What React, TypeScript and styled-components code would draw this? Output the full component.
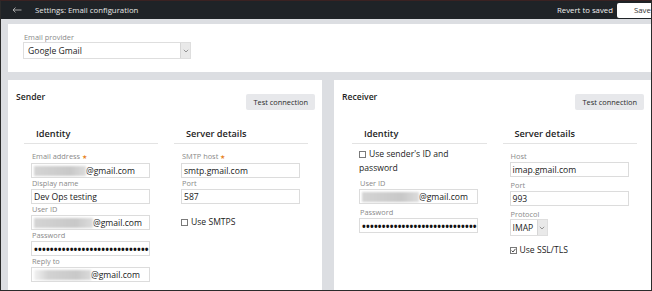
import React from 'react';
import styled, { createGlobalStyle } from 'styled-components';

const Global = createGlobalStyle`
  html, body { margin: 0; padding: 0; background: #fff; }
  body { font-family: "Open Sans", "Liberation Sans", sans-serif; }
  * { box-sizing: border-box; }
`;

const Frame = styled.div`
  width: 652px;
  height: 291px;
  border: 1px solid #2b2b2b;
  border-top-color: #3a2222;
  background: #dcdee2;
  overflow: hidden;
  display: flex;
  flex-direction: column;
`;

const Header = styled.header`
  height: 18px;
  flex: none;
  background: #1f2327;
  display: flex;
  align-items: center;
  color: #ececec;
`;

const BackButton = styled.span`
  display: flex;
  margin-left: 11px;
  width: 10px;
`;

const Title = styled.span`
  margin-left: 13px;
  font-size: 7.8px;
  line-height: 10px;
  color: #e6e6e6;
  flex: 1;
`;

const Revert = styled.span`
  font-size: 7.8px;
  color: #f0f0f0;
  margin-right: 4px;
`;

const SaveButton = styled.span`
  height: 15px;
  width: 34px;
  flex: none;
  background: #fff;
  color: #333;
  font-size: 7.8px;
  border-radius: 2px 0 0 2px;
  display: flex;
  align-items: center;
  padding-left: 17px;
  overflow: hidden;
  white-space: nowrap;
`;

const Body = styled.main`
  flex: 1;
  display: flex;
  flex-direction: column;
  padding: 5px 0 0 7px;
  min-height: 0;
`;

const ProviderPanel = styled.section`
  height: 48px;
  flex: none;
  background: #fff;
  padding: 8px 0 0 15px;
`;

const Label = styled.div`
  font-size: 7.4px;
  line-height: 10px;
  color: #8a8a8a;
  padding-left: 1px;
  white-space: nowrap;
`;

const Required = styled.span`
  color: #e8862a;
  font-size: 6px;
  margin-left: 2px;
`;

const Select = styled.div<{ $width: number }>`
  width: ${(p) => p.$width}px;
  height: 17px;
  border: 1px solid #dedede;
  background: #fff;
  display: flex;
  align-items: stretch;
  font-size: 8.6px;
  color: #1c1c1c;
`;

const SelectText = styled.span<{ $pad: number }>`
  flex: 1;
  display: flex;
  align-items: center;
  padding-left: ${(p) => p.$pad}px;
`;

const SelectArrow = styled.span`
  width: 10px;
  background: #e9e9e9;
  border-left: 1px solid #d6d6d6;
  display: flex;
  align-items: center;
  justify-content: center;
`;

const CardsRow = styled.div`
  flex: 1;
  display: grid;
  grid-template-columns: 314px 317px;
  column-gap: 12px;
  margin-top: 8px;
  min-height: 0;
`;

const Card = styled.section`
  background: #fff;
  display: flex;
  flex-direction: column;
`;

const CardHeader = styled.div`
  display: flex;
  justify-content: space-between;
  align-items: flex-start;
  padding: 0 7px 0 8px;
`;

const CardTitle = styled.h2`
  margin: 12px 0 0;
  font-size: 8.6px;
  line-height: 10px;
  font-weight: 600;
  color: #1d1d1d;
`;

const TestButton = styled.span`
  margin-top: 14px;
  height: 16px;
  padding: 0 7px;
  background: #e7e8eb;
  border-radius: 2px;
  font-size: 7.4px;
  color: #2a2a2a;
  display: flex;
  align-items: center;
`;

const Columns = styled.div<{ $left: number }>`
  display: grid;
  grid-template-columns: 1fr 1fr;
  column-gap: 16px;
  padding: 0 14px 0 ${(p) => p.$left}px;
  margin-top: 16px;
`;

const Column = styled.div``;

const ColumnHeading = styled.h3`
  margin: 0;
  padding: 2px 12px 4px;
  font-size: 9.2px;
  line-height: 11px;
  font-weight: 600;
  color: #1d1d1d;
  border-bottom: 1px solid #e3e3e3;
`;

const Fields = styled.div<{ $gap: number }>`
  display: flex;
  flex-direction: column;
  gap: ${(p) => p.$gap}px;
  padding: 7px 0 0 7px;
`;

const FieldGroup = styled.div`
  display: flex;
  flex-direction: column;
`;

const Input = styled.div`
  width: 119px;
  height: 15px;
  margin-top: 1px;
  border: 1px solid #dcdcdc;
  background: #fff;
  padding: 0 2px;
  display: flex;
  align-items: center;
  font-size: 8.6px;
  color: #1a1a1a;
  overflow: hidden;
  white-space: nowrap;
`;

const Dots = styled.span`
  font-size: 10px;
  letter-spacing: 0.2px;
  color: #111;
  font-weight: 700;
`;

const Blur = styled.span<{ $width: number; $fade?: boolean }>`
  display: inline-block;
  flex: none;
  width: ${(p) => p.$width}px;
  height: 10px;
  background: ${(p) =>
    p.$fade
      ? 'linear-gradient(to right, #f2f2f2, #d2d2d2 25%, #c9c9c9 75%, #dadada)'
      : 'linear-gradient(to right, #d4d4d4, #c8c8c8 70%, #dcdcdc)'};
  filter: blur(1px);
`;

const CheckRow = styled.label<{ $top: number }>`
  display: flex;
  align-items: flex-start;
  margin-top: ${(p) => p.$top}px;
  font-size: 8.6px;
  line-height: 14px;
  color: #1c1c1c;
`;

const CheckBox = styled.span`
  flex: none;
  width: 7px;
  height: 7px;
  border: 1px solid #7a7a7a;
  background: #fff;
  margin: 4px 3px 0 0;
  display: flex;
  align-items: center;
  justify-content: center;
`;

const WrapText = styled.span<{ $max?: number }>`
  max-width: ${(p) => (p.$max ? `${p.$max}px` : 'none')};
`;

const InlineCheck = styled.span`
  display: inline-block;
  width: 7px;
  height: 7px;
  border: 1px solid #7a7a7a;
  background: #fff;
  margin-right: 3px;
  vertical-align: -0.5px;
`;

const Chevron = () => (
  <svg width="6" height="4" viewBox="0 0 6 4">
    <path d="M0.8 0.8 L3 3 L5.2 0.8" fill="none" stroke="#8a8a8a" strokeWidth="0.9" />
  </svg>
);

const Check = () => (
  <svg width="5" height="5" viewBox="0 0 5 5">
    <path d="M0.6 2.6 L2 4 L4.5 0.8" fill="none" stroke="#333" strokeWidth="0.9" />
  </svg>
);

const BackArrow = () => (
  <svg width="10" height="6" viewBox="0 0 10 6">
    <path d="M9.5 3 H1 M3.5 0.6 L1 3 L3.5 5.4" fill="none" stroke="#b4b4b4" strokeWidth="0.9" />
  </svg>
);

const PASSWORD = '••••••••••••••••••••••••••••••••';

const Field: React.FC<{ label: string; required?: boolean; children: React.ReactNode }> = ({
  label,
  required,
  children,
}) => (
  <FieldGroup>
    <Label>
      {label}
      {required && <Required>★</Required>}
    </Label>
    <Input>{children}</Input>
  </FieldGroup>
);

const Email: React.FC<{ blur: number; fade?: boolean }> = ({ blur, fade }) => (
  <>
    <Blur $width={blur} $fade={fade} />
    <span>@gmail.com</span>
  </>
);

export default function App() {
  return (
    <>
      <Global />
      <Frame>
        <Header>
          <BackButton>
            <BackArrow />
          </BackButton>
          <Title>Settings: Email configuration</Title>
          <Revert>Revert to saved</Revert>
          <SaveButton>Save</SaveButton>
        </Header>
        <Body>
          <ProviderPanel>
            <Label>Email provider</Label>
            <Select $width={168}>
              <SelectText $pad={4}>Google Gmail</SelectText>
              <SelectArrow>
                <Chevron />
              </SelectArrow>
            </Select>
          </ProviderPanel>
          <CardsRow>
            <Card>
              <CardHeader>
                <CardTitle>Sender</CardTitle>
                <TestButton>Test connection</TestButton>
              </CardHeader>
              <Columns $left={16}>
                <Column>
                  <ColumnHeading>Identity</ColumnHeading>
                  <Fields $gap={0}>
                    <Field label="Email address" required>
                      <Email blur={52} />
                    </Field>
                    <Field label="Display name">Dev Ops testing</Field>
                    <Field label="User ID">
                      <Email blur={59} />
                    </Field>
                    <Field label="Password">
                      <Dots>{PASSWORD}</Dots>
                    </Field>
                    <Field label="Reply to">
                      <Email blur={57} fade />
                    </Field>
                  </Fields>
                </Column>
                <Column>
                  <ColumnHeading>Server details</ColumnHeading>
                  <Fields $gap={0}>
                    <Field label="SMTP host" required>
                      smtp.gmail.com
                    </Field>
                    <Field label="Port">587</Field>
                    <CheckRow $top={11}>
                      <CheckBox />
                      <span>Use SMTPS</span>
                    </CheckRow>
                  </Fields>
                </Column>
              </Columns>
            </Card>
            <Card>
              <CardHeader>
                <CardTitle>Receiver</CardTitle>
                <TestButton>Test connection</TestButton>
              </CardHeader>
              <Columns $left={18}>
                <Column>
                  <ColumnHeading>Identity</ColumnHeading>
                  <Fields $gap={3}>
                    <CheckRow $top={-4}>
                      <WrapText $max={90}>
                        <InlineCheck />
                        Use sender's ID and password
                      </WrapText>
                    </CheckRow>
                    <Field label="User ID">
                      <Email blur={57} />
                    </Field>
                    <Field label="Password">
                      <Dots>{PASSWORD}</Dots>
                    </Field>
                  </Fields>
                </Column>
                <Column>
                  <ColumnHeading>Server details</ColumnHeading>
                  <Fields $gap={3}>
                    <Field label="Host">imap.gmail.com</Field>
                    <Field label="Port">993</Field>
                    <FieldGroup>
                      <Label>Protocol</Label>
                      <Select $width={38}>
                        <SelectText $pad={2}>IMAP</SelectText>
                        <SelectArrow>
                          <Chevron />
                        </SelectArrow>
                      </Select>
                    </FieldGroup>
                    <CheckRow $top={4}>
                      <CheckBox>
                        <Check />
                      </CheckBox>
                      <span>Use SSL/TLS</span>
                    </CheckRow>
                  </Fields>
                </Column>
              </Columns>
            </Card>
          </CardsRow>
        </Body>
      </Frame>
    </>
  );
}
